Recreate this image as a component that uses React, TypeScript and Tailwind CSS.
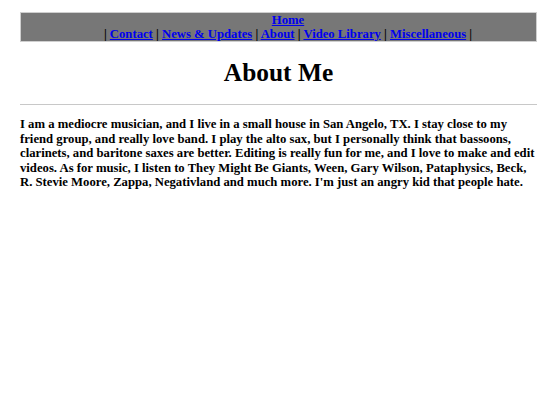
import React from 'react';

const links = ['Contact', 'News & Updates', 'About', 'Video Library', 'Miscellaneous'];

const App: React.FC = () => {
    return (
        <div className="min-h-screen bg-white font-['Liberation_Serif','Times_New_Roman',serif] text-[12.7px] text-black font-bold">
            <div className="w-[517px] ml-[20px] pt-[12px]">
                {/* Nav */}
                <div className="border border-[#cfcfcf] bg-[#777777] pl-[19px] text-center leading-[14px]">
                    <div>
                        <a href="#" className="text-[#0000ee] underline">Home</a>
                    </div>
                    <div>
                        |{' '}
                        {links.map((l) => (
                            <React.Fragment key={l}>
                                <a href="#" className="text-[#0000ee] underline">{l}</a> |{' '}
                            </React.Fragment>
                        ))}
                    </div>
                </div>

                <h1 className="mt-[16px] text-center text-[25.4px] leading-[29px] font-bold">About Me</h1>

                <div className="mt-[17px] h-px bg-[#c8c8c8]" />

                <p className="mt-[12px] leading-[14.6px]">
                    I am a mediocre musician, and I live in a small house in San Angelo, TX. I stay close to my
                    friend group, and really love band. I play the alto sax, but I personally think that bassoons,
                    clarinets, and baritone saxes are better. Editing is really fun for me, and I love to make and edit
                    videos. As for music, I listen to They Might Be Giants, Ween, Gary Wilson, Pataphysics, Beck,
                    R. Stevie Moore, Zappa, Negativland and much more. I'm just an angry kid that people hate.
                </p>
            </div>
        </div>
    );
};

export default App;
